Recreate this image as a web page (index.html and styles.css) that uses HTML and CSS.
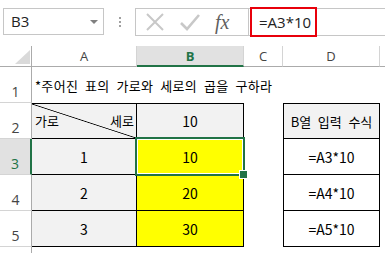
FILE: index.html
```html
<!DOCTYPE html>
<html lang="ko">
<head>
<meta charset="utf-8">
<link rel="stylesheet" href="styles.css">
</head>
<body>
<div class="topbar">
  <div class="namebox">B3<span class="arrow"></span></div>
  <div class="dots"><i></i><i></i><i></i></div>
  <div class="fbox">
    <div class="fbtns">
      <svg class="ico" width="20" height="20" viewBox="0 0 20 20"><path d="M2 2 L18 18 M18 2 L2 18" stroke="#c8c8c8" stroke-width="2" fill="none"/></svg>
      <svg class="ico" width="20" height="20" viewBox="0 0 20 20"><path d="M1 11 L7 17 L19 3" stroke="#c8c8c8" stroke-width="2.6" fill="none"/></svg>
      <span class="fx">fx</span>
    </div>
    <div class="finput"><span class="hl">=A3*10</span></div>
  </div>
</div>
<div class="sheet">
  <div class="ch corner"><span class="tri"></span></div>
  <div class="ch">A</div>
  <div class="ch sel">B</div>
  <div class="ch">C</div>
  <div class="ch">D</div>
  <div class="ch rest"></div>

  <div class="rh">1</div>
  <div class="c title">*주어진 표의 가로와 세로의 곱을 구하라</div>
  <div class="c"></div>

  <div class="rh">2</div>
  <div class="c t a top diag"><span>가로</span><span>세로</span></div>
  <div class="c t b top gray">10</div>
  <div class="c"></div>
  <div class="c t d top gray">B열 입력 수식</div>
  <div class="c"></div>

  <div class="rh rsel">3</div>
  <div class="c t a gray">1</div>
  <div class="c t b yellow active">10</div>
  <div class="c"></div>
  <div class="c t d">=A3*10</div>
  <div class="c"></div>

  <div class="rh">4</div>
  <div class="c t a gray">2</div>
  <div class="c t b yellow">20</div>
  <div class="c"></div>
  <div class="c t d">=A4*10</div>
  <div class="c"></div>

  <div class="rh">5</div>
  <div class="c t a gray">3</div>
  <div class="c t b yellow">30</div>
  <div class="c"></div>
  <div class="c t d">=A5*10</div>
  <div class="c"></div>

  <div class="rh last"></div>
</div>
</body>
</html>
```
FILE: styles.css
```css
* { box-sizing: border-box; }
html, body { margin: 0; padding: 0; }
body {
  width: 385px;
  height: 253px;
  overflow: hidden;
  background: #fff;
  font-family: "Noto Sans CJK KR", "Noto Sans", sans-serif;
  color: #000;
}
.topbar {
  display: flex;
  align-items: flex-start;
  height: 46px;
  padding-top: 8px;
}
.namebox {
  position: relative;
  margin-left: 3px;
  width: 101px;
  height: 27px;
  border: 1px solid #c6c6c6;
  padding-left: 7px;
  font-size: 15px;
  line-height: 25px;
  color: #222;
  font-family: "Open Sans", "Noto Sans", sans-serif;
}
.arrow {
  position: absolute;
  right: 5px;
  top: 11px;
  border-left: 4px solid transparent;
  border-right: 4px solid transparent;
  border-top: 4px solid #808080;
}
.dots {
  width: 31px;
  height: 27px;
  display: flex;
  flex-direction: column;
  align-items: center;
  justify-content: center;
  gap: 2px;
}
.dots i {
  display: block;
  width: 2px;
  height: 2px;
  background: #a0a0a0;
}
.fbox {
  flex: 1;
  height: 28px;
  border: 1px solid #c6c6c6;
  border-right: none;
  display: flex;
}
.fbtns {
  width: 113px;
  border-right: 1px solid #c6c6c6;
  display: flex;
  align-items: center;
  padding-left: 9px;
  gap: 15px;
}
.fx {
  font-family: "Liberation Serif", serif;
  font-style: italic;
  font-size: 20px;
  color: #606060;
  line-height: 20px;
}
.finput {
  flex: 1;
  padding-left: 1px;
}
.hl {
  display: inline-block;
  width: 67px;
  height: 30px;
  margin-top: -3px;
  border: 2px solid #e8000b;
  padding-left: 7px;
  font-size: 15px;
  line-height: 26px;
  color: #222;
  font-family: "Open Sans", "Noto Sans", sans-serif;
}
.sheet {
  display: grid;
  grid-template-columns: 32px 105px 107px 39px 97px 5px;
  grid-template-rows: 21px 36px 36px 36px 36px 36px 10px;
}
.ch {
  border-right: 1px solid #d4d4d4;
  border-bottom: 1px solid #ababab;
  font-size: 13px;
  color: #444;
  text-align: center;
  line-height: 20px;
  font-family: "Open Sans", "Noto Sans", sans-serif;
}
.ch.corner {
  position: relative;
  border-right-color: #ababab;
}
.tri {
  position: absolute;
  right: 1px;
  bottom: 2px;
  width: 0;
  height: 0;
  border-left: 15px solid transparent;
  border-bottom: 14px solid #dadada;
}
.ch.sel {
  background: #e1e1e1;
  color: #217346;
  font-weight: bold;
  border-bottom: 2px solid #217346;
}
.ch.rest { border-right: none; }
.rh {
  grid-column: 1;
  border-right: 1px solid #ababab;
  border-bottom: 1px solid #d4d4d4;
  display: flex;
  align-items: flex-end;
  justify-content: center;
  padding-bottom: 1px;
  font-size: 14px;
  color: #444;
  font-family: "Open Sans", "Noto Sans", sans-serif;
}
.rh.rsel {
  background: #e1e1e1;
  color: #217346;
  border-right: 2px solid #217346;
}
.rh.last { border-bottom: none; }
.c { font-size: 14px; }
.title {
  grid-column: 2 / span 4;
  display: flex;
  align-items: center;
  padding-left: 3px;
  font-size: 13px;
  letter-spacing: 0.3px;
  word-spacing: 3px;
  white-space: nowrap;
}
.t {
  display: flex;
  align-items: center;
  justify-content: center;
  border-bottom: 1px solid #000;
  border-right: 1px solid #000;
}
.top { border-top: 1px solid #000; }
.d { border-left: 1px solid #000; grid-column: 5; }
.a { grid-column: 2; }
.b { grid-column: 3; }
.gray { background: #f2f2f2; }
.yellow { background: #ffff00; }
.diag {
  justify-content: space-between;
  padding: 0 2px 2px 3px;
  font-size: 13px;
  background: linear-gradient(to top right, #f2f2f2 calc(50% - 0.8px), #000 50%, #f2f2f2 calc(50% + 0.8px));
}
.d.top { font-size: 13px; word-spacing: 3px; }
.active { position: relative; }
.active::before {
  content: "";
  position: absolute;
  left: -2px;
  top: -2px;
  right: -2px;
  bottom: -2px;
  border: 2px solid #217346;
  box-shadow: inset 0 0 0 1px #fff;
}
.active::after {
  content: "";
  position: absolute;
  right: -5px;
  bottom: -5px;
  width: 7px;
  height: 7px;
  background: #217346;
  border: 1px solid #fff;
}
```
